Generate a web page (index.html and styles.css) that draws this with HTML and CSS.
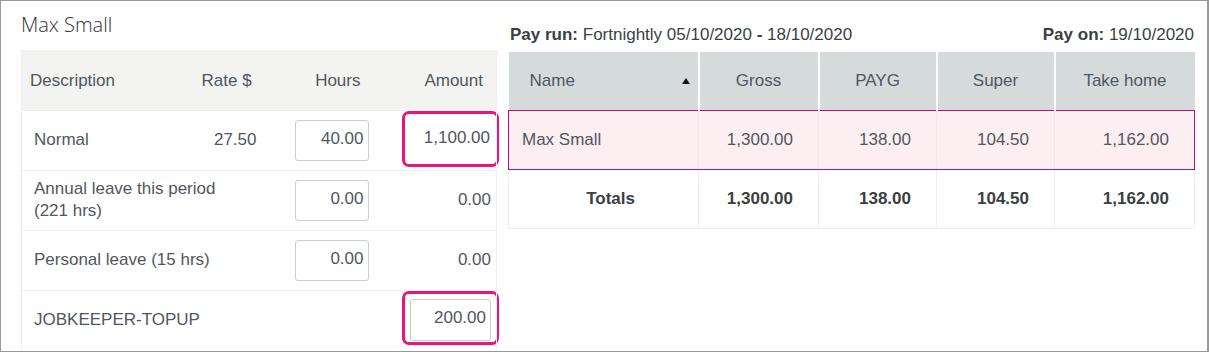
FILE: index.html
```html
<!DOCTYPE html>
<html lang="en">
<head>
    <meta charset="UTF-8">
    <title>Pay run - Max Small</title>
    <link rel="stylesheet" href="styles.css">
</head>
<body>

    <div class="frame">

        <!-- Employee pay items -->
        <div class="employee-panel">
            <h2 class="employee-name">Max Small</h2>

            <table class="pay-items">
                <colgroup>
                    <col class="w-desc">
                    <col class="w-rate">
                    <col class="w-hours">
                    <col class="w-amount">
                </colgroup>
                <thead>
                    <tr>
                        <th class="col-desc">Description</th>
                        <th class="col-rate">Rate $</th>
                        <th class="col-hours">Hours</th>
                        <th class="col-amount">Amount</th>
                    </tr>
                </thead>
                <tbody>
                    <tr>
                        <td class="col-desc">Normal</td>
                        <td class="col-rate">27.50</td>
                        <td class="col-hours"><input type="text" class="hours-input" value="40.00"></td>
                        <td class="col-amount"><div class="highlight">1,100.00</div></td>
                    </tr>
                    <tr>
                        <td class="col-desc">Annual leave this period<br>(221 hrs)</td>
                        <td class="col-rate"></td>
                        <td class="col-hours"><input type="text" class="hours-input" value="0.00"></td>
                        <td class="col-amount">0.00</td>
                    </tr>
                    <tr>
                        <td class="col-desc">Personal leave (15 hrs)</td>
                        <td class="col-rate"></td>
                        <td class="col-hours"><input type="text" class="hours-input" value="0.00"></td>
                        <td class="col-amount">0.00</td>
                    </tr>
                    <tr>
                        <td class="col-desc">JOBKEEPER-TOPUP</td>
                        <td class="col-rate"></td>
                        <td class="col-hours"></td>
                        <td class="col-amount">
                            <div class="highlight highlight-input">
                                <input type="text" class="amount-input" value="200.00">
                            </div>
                        </td>
                    </tr>
                </tbody>
            </table>
        </div>

        <!-- Pay run summary -->
        <div class="summary-panel">
            <div class="pay-info">
                <span><b>Pay run:</b> Fortnightly 05/10/2020 <b>-</b> 18/10/2020</span>
                <span><b>Pay on:</b> 19/10/2020</span>
            </div>

            <table class="summary">
                <colgroup>
                    <col class="w-name">
                    <col class="w-gross">
                    <col class="w-payg">
                    <col class="w-super">
                    <col class="w-take">
                </colgroup>
                <thead>
                    <tr>
                        <th class="col-name">Name <span class="sort-arrow"></span></th>
                        <th>Gross</th>
                        <th>PAYG</th>
                        <th>Super</th>
                        <th>Take home</th>
                    </tr>
                </thead>
                <tbody>
                    <tr class="selected">
                        <td class="col-name">Max Small</td>
                        <td>1,300.00</td>
                        <td>138.00</td>
                        <td>104.50</td>
                        <td>1,162.00</td>
                    </tr>
                    <tr class="totals">
                        <td class="col-name">Totals</td>
                        <td>1,300.00</td>
                        <td>138.00</td>
                        <td>104.50</td>
                        <td>1,162.00</td>
                    </tr>
                </tbody>
            </table>
        </div>

    </div>

</body>
</html>
```

FILE: styles.css
```css
/* General Page Styles */
body {
    margin: 0;
    padding: 0;
    font-family: "Liberation Sans", Arial, sans-serif;
    font-size: 17px;
    color: #50575e;
    background-color: #fff;
}

.frame {
    display: flex;
    gap: 12px;
    width: 1209px;
    height: 352px;
    box-sizing: border-box;
    border: 1px solid #999;
    border-right-width: 2px;
    padding: 0 13px 0 20px;
    overflow: hidden;
}

/* Left Panel */
.employee-panel {
    width: 475px;
    flex-shrink: 0;
}

.employee-name {
    font-family: "Open Sans", sans-serif;
    font-weight: 300;
    font-size: 20px;
    color: #333;
    margin: 10px 0 0 0;
    height: 39px;
}

.pay-items {
    width: 475px;
    border-collapse: collapse;
    table-layout: fixed;
    border-left: 1px solid #eee;
    border-right: 1px solid #eee;
}

.w-desc { width: 180px; }
.w-rate { width: 65px; }
.w-hours { width: 112px; }
.w-amount { width: 118px; }

.pay-items th,
.pay-items td {
    box-sizing: border-box;
    padding: 0;
    white-space: nowrap;
}

.pay-items th {
    background-color: #f3f3f1;
    font-weight: normal;
    height: 60px;
    padding-top: 2px;
}

.pay-items td {
    height: 60px;
    border-top: 1px solid #eee;
    line-height: 22px;
}

.pay-items .col-desc {
    text-align: left;
    overflow: visible;
}

.pay-items th.col-desc {
    padding-left: 8px;
}

.pay-items td.col-desc {
    padding-left: 12px;
}

.pay-items .col-rate,
.pay-items .col-hours,
.pay-items .col-amount {
    text-align: right;
}

.pay-items th.col-rate {
    padding-right: 23px;
}

.pay-items td.col-rate {
    padding-right: 10px;
}

.pay-items th.col-hours {
    padding-right: 18px;
}

.pay-items td.col-hours {
    padding-right: 10px;
}

.pay-items th.col-amount {
    padding-right: 13px;
}

.pay-items td.col-amount {
    padding-right: 5px;
}

/* Inputs */
.hours-input,
.amount-input {
    width: 74px;
    height: 41px;
    box-sizing: border-box;
    border: 1px solid #ccc;
    border-radius: 3px;
    padding: 0 4px 3px 0;
    font-family: "Liberation Sans", Arial, sans-serif;
    font-size: 17px;
    color: #50575e;
    text-align: right;
    vertical-align: middle;
}

.amount-input {
    width: 81px;
    height: 42px;
}

/* Highlight marks */
.highlight {
    box-sizing: border-box;
    width: 97px;
    height: 56px;
    margin: 0 -8px 3px auto;
    padding: 13px 6px 0 0;
    border: 3px solid #e8157a;
    border-radius: 7px;
    text-align: right;
}

.highlight-input {
    height: 54px;
    margin: 0 -8px 5px auto;
    padding: 5px 5px 0 0;
}

/* Right Panel */
.summary-panel {
    width: 686px;
    flex-shrink: 0;
}

.pay-info {
    display: flex;
    justify-content: space-between;
    margin: 24px 0 0 2px;
    height: 27px;
    color: #3a3f44;
}

.summary {
    width: 686px;
    border-collapse: collapse;
    table-layout: fixed;
}

.w-name { width: 190px; }
.w-gross { width: 120px; }
.w-payg { width: 118px; }
.w-super { width: 118px; }
.w-take { width: 140px; }

.summary th,
.summary td {
    box-sizing: border-box;
}

.summary th {
    background-color: #d5dbdb;
    font-weight: normal;
    height: 58px;
    padding: 1px 0 0 0;
    border-left: 2px solid #fff;
    text-align: center;
}

.summary th:first-child {
    border-left: none;
}

.summary th.col-name {
    text-align: left;
    padding-left: 21px;
    position: relative;
}

.sort-arrow {
    position: absolute;
    right: 8px;
    top: 26px;
    width: 0;
    height: 0;
    border-left: 4.5px solid transparent;
    border-right: 4.5px solid transparent;
    border-bottom: 6px solid #111;
}

.summary td {
    height: 59px;
    padding: 0 25px 0 0;
    text-align: right;
    border-left: 1px solid #eee;
}

.summary td:first-child {
    border-left: none;
}

.summary tr.selected td {
    background-color: #fdeef2;
    border-top: 1px solid #b5127a;
    border-bottom: 1px solid #b5127a;
    border-left-color: #f8e4ea;
}

.summary tr.selected td:first-child {
    border-left: 1px solid #b5127a;
}

.summary tr.selected td:last-child {
    border-right: 1px solid #b5127a;
}

.summary tr.selected td.col-name {
    text-align: left;
    padding-left: 13px;
}

.summary tr.totals td {
    font-weight: bold;
    color: #3a3f44;
    border-bottom: 1px solid #eee;
}

.summary tr.totals td:first-child {
    border-left: 1px solid #eee;
    padding-right: 63px;
}

.summary tr.totals td:last-child {
    border-right: 1px solid #eee;
}
```
